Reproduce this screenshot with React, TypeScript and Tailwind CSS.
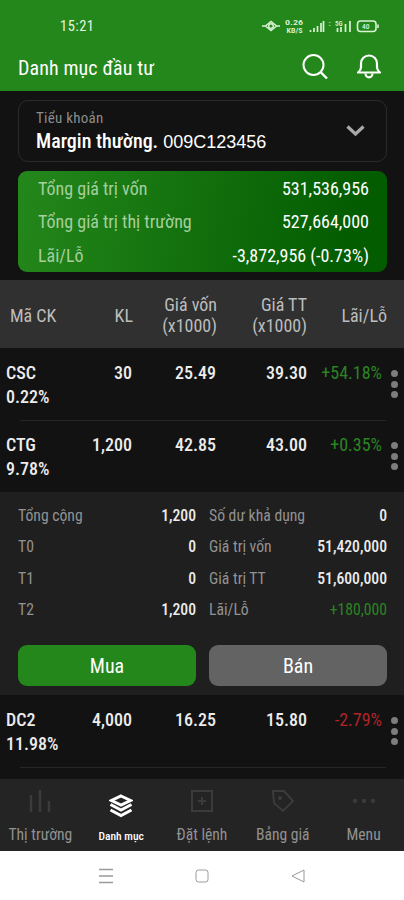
import type { ReactNode } from "react";
import clsx from "clsx";

interface Holding {
  symbol: string;
  weight: string;
  quantity: string;
  cost: string;
  price: string;
  change: string;
}

const summary = [
  { label: "Tổng giá trị vốn", value: "531,536,956" },
  { label: "Tổng giá trị thị trường", value: "527,664,000" },
  { label: "Lãi/Lỗ", value: "-3,872,956 (-0.73%)" },
];

const csc: Holding = { symbol: "CSC", weight: "0.22%", quantity: "30", cost: "25.49", price: "39.30", change: "+54.18%" };
const ctg: Holding = { symbol: "CTG", weight: "9.78%", quantity: "1,200", cost: "42.85", price: "43.00", change: "+0.35%" };
const dc2: Holding = { symbol: "DC2", weight: "11.98%", quantity: "4,000", cost: "16.25", price: "15.80", change: "-2.79%" };

const settlement = [
  { label: "Tổng cộng", value: "1,200" },
  { label: "T0", value: "0" },
  { label: "T1", value: "0" },
  { label: "T2", value: "1,200" },
];

const valuation = [
  { label: "Số dư khả dụng", value: "0" },
  { label: "Giá trị vốn", value: "51,420,000" },
  { label: "Giá trị TT", value: "51,600,000" },
  { label: "Lãi/Lỗ", value: "+180,000" },
];

function StatusBar() {
  return (
    <div className="flex h-[52px] items-center justify-between pl-[60px] pr-6">
      <span className="pt-[2px] text-[14.5px] font-[450] tracking-[0.5px] text-[#e4f6e2]">15:21</span>
      <svg width="118" height="18" viewBox="0 0 118 18" fill="none" stroke="#d9f2d6">
        <path d="M0 9h4M14 9h4M3.500 9 9 4.500l5.500 4.500L9 13.500z" strokeWidth="1.500" />
        <circle cx="9" cy="9" r="2.300" strokeWidth="1.400" />
        <g fill="#d9f2d6" stroke="none" fontFamily="Roboto, sans-serif" fontWeight="600">
          <text x="23" y="8" fontSize="7.500" textLength="18" lengthAdjust="spacingAndGlyphs">0.26</text>
          <text x="24.500" y="16" fontSize="6.500" textLength="16" lengthAdjust="spacingAndGlyphs">KB/S</text>
          <text x="66.500" y="9" fontSize="8">:</text>
          <text x="73" y="8.500" fontSize="7">5G</text>
          <text x="100" y="11.800" fontSize="7.500" fontWeight="500">40</text>
        </g>
        <path d="M48.500 15v-2M52 15v-4M55.500 15V9M59 15V6M61.500 15V4M75.500 15v-4M79 15v-5M83.500 15V7M88 15V4" strokeWidth="1.700" />
        <rect x="95.500" y="4" width="18.500" height="10.500" rx="3" strokeWidth="1.600" />
        <path d="M116 7.500v3.500" strokeWidth="1.600" />
      </svg>
    </div>
  );
}

function TitleBar() {
  return (
    <div className="flex h-[39px] items-start pl-[18px] pr-[22px]">
      <h1 className="flex-1 pt-px text-[20px] font-[450] leading-[30px] tracking-[0.1px]">Danh mục đầu tư</h1>
      <svg width="26" height="26" viewBox="0 0 26 26" fill="none" stroke="currentColor" strokeWidth="2" className="mt-[1px]">
        <circle cx="11.500" cy="12" r="10" />
        <path d="m18.500 19 6.500 6.500" strokeWidth="2.400" />
      </svg>
      <svg width="26" height="28" viewBox="0 0 26 28" fill="none" stroke="currentColor" strokeWidth="2.200" strokeLinejoin="round" className="ml-7">
        <path d="M2 20.500c2-1.700 3-3 3-5v-4a8 8 0 0 1 16 0v4c0 2 1 3.300 3 5z" />
        <path d="M9.500 21.500a3.500 3.800 0 0 0 7 0" />
      </svg>
    </div>
  );
}

function AccountPicker() {
  return (
    <div className="flex h-[62px] items-center justify-between rounded-[10px] border border-[#2b2b2b] pl-[17px] pr-[21px]">
      <div>
        <p className="pt-px text-[15px] leading-[18px] tracking-[0.25px] text-[#8c8c8c]">Tiểu khoản</p>
        <p className="flex items-baseline gap-[5px] whitespace-nowrap pt-px text-[20px] font-medium leading-[26px]">
          Margin thường.
          <span className="font-['Liberation_Sans'] text-[18px] font-normal">009C123456</span>
        </p>
      </div>
      <svg width="19" height="12" viewBox="0 0 19 12" fill="none" stroke="#a9a9a9" strokeWidth="3.200">
        <path d="m1.500 1.500 8 7.500 8-7.500" />
      </svg>
    </div>
  );
}

function Row({ item, divider, tall }: { item: Holding; divider?: boolean; tall?: boolean }) {
  const down = item.change.startsWith("-");
  return (
    <div className={clsx("relative flex pt-[13px] text-[18px] font-[480] leading-6 text-[#ececec]", tall ? "h-[84px]" : "h-[72px]")}>
      <div className="w-[70px] pl-[6px]">
        <p>{item.symbol}</p>
        <p>{item.weight}</p>
      </div>
      <span className="w-[62px] text-right">{item.quantity}</span>
      <span className="w-[84px] text-right">{item.cost}</span>
      <span className="w-[91px] text-right">{item.price}</span>
      <span className={clsx("w-[75px] text-right font-normal", down ? "text-[#ae2529]" : "text-[#2a8523]")}>{item.change}</span>
      <div className="ml-[9px] mt-[9px] flex flex-col gap-[3.500px]">
        <i className="size-[7px] rounded-full bg-[#7d7d7d]" />
        <i className="size-[7px] rounded-full bg-[#7d7d7d]" />
        <i className="size-[7px] rounded-full bg-[#7d7d7d]" />
      </div>
      {divider && <div className={clsx("absolute left-5 right-[18px] h-px bg-[#262626]", tall ? "top-[72px]" : "bottom-[-1px]")} />}
    </div>
  );
}

function DetailList({ rows }: { rows: { label: string; value: string }[] }) {
  return (
    <dl className="flex-1">
      {rows.map((row) => (
        <div key={row.label} className="flex h-[31.400px] items-center justify-between text-[15.7px]">
          <dt className="text-[#929292]">{row.label}</dt>
          <dd className={row.value.startsWith("+") ? "text-[#2a8523]" : "font-[480] text-[#ececec]"}>{row.value}</dd>
        </div>
      ))}
    </dl>
  );
}

function Tab({ label, active, children }: { label: string; active?: boolean; children: ReactNode }) {
  return (
    <div className={clsx("flex w-[81px] flex-col items-center", active ? "text-white" : "text-[#3b3b3b]")}>
      <div className="flex h-[44px] items-center">{children}</div>
      <span className={clsx("whitespace-nowrap leading-6", active ? "pt-px text-[11.5px] font-medium" : "text-[15.6px] text-[#929292]")}>{label}</span>
    </div>
  );
}

export default function App() {
  return (
    <div className="h-[900px] w-[404px] overflow-hidden bg-[#121212] font-['Roboto_Condensed',Roboto,sans-serif] text-white font-stretch-condensed">
      <header className="h-[91px] bg-[#24871b]">
        <StatusBar />
        <TitleBar />
      </header>

      <section className="flex h-[189px] flex-col gap-[9px] pl-[18px] pr-[17px] pt-[9px]">
        <AccountPicker />
        <div className="h-[101px] rounded-[9px] bg-linear-[100deg] from-[#24871b] to-[#035c00] to-90% pl-5 pr-[18px] pt-[1px]">
          {summary.map((row) => (
            <div key={row.label} className="flex h-[33.300px] items-center justify-between text-[18px]">
              <span className="text-[#a5cf9f]">{row.label}</span>
              <span className="font-[450]">{row.value}</span>
            </div>
          ))}
        </div>
      </section>

      <div className="flex h-[68px] items-center bg-[#303030] pt-[2px] text-[18px] leading-[21px] text-[#bcbcbc]">
        <span className="w-[70px] pl-[10px]">Mã CK</span>
        <span className="w-[63px] text-right">KL</span>
        <span className="w-[84px] text-right">Giá vốn<br />(x1000)</span>
        <span className="w-[90px] text-right">Giá TT<br />(x1000)</span>
        <span className="w-[80px] text-right">Lãi/Lỗ</span>
      </div>

      <Row item={csc} divider />
      <Row item={ctg} />

      <section className="h-[203px] bg-[#1f1f1f] pl-[18px] pr-[17px] pt-[8px]">
        <div className="flex gap-[13px]">
          <DetailList rows={settlement} />
          <DetailList rows={valuation} />
        </div>
        <div className="mt-[19px] flex h-[41px] gap-[13px] text-[20px] font-[450]">
          <button className="flex-1 rounded-[9px] bg-[#24871b] pt-[2px]">Mua</button>
          <button className="flex-1 rounded-[9px] bg-[#636363] pt-[2px]">Bán</button>
        </div>
      </section>

      <Row item={dc2} divider tall />

      <nav className="flex h-[72px] bg-[#242424]">
        <Tab label="Thị trường">
          <svg width="24" height="24" viewBox="0 0 24 24" stroke="currentColor" strokeWidth="2.500">
            <path d="M3 23V6M12 23V1M21 23V12" />
          </svg>
        </Tab>
        <Tab label="Danh mục" active>
          <svg width="24" height="24" viewBox="0 0 24 24" fill="none" stroke="currentColor" strokeWidth="2.500" className="mt-[9px]">
            <path d="m12 2 9.500 4.500L12 11 2.500 6.500zM1.500 10.500 12 16l10.500-5.500M1.500 16 12 21.500 22.500 16" strokeWidth="3" />
          </svg>
        </Tab>
        <Tab label="Đặt lệnh">
          <svg width="22" height="22" viewBox="0 0 22 22" fill="none" stroke="currentColor" strokeWidth="2">
            <path d="M1 1h20v20H1zM11 7v8M7 11h8" />
          </svg>
        </Tab>
        <Tab label="Bảng giá">
          <svg width="24" height="24" viewBox="0 0 24 24" fill="none" stroke="currentColor" strokeWidth="2">
            <path d="M2 2h11l9 10-10 10L3 14z" />
            <circle cx="9" cy="9" r="1" />
          </svg>
        </Tab>
        <Tab label="Menu">
          <svg width="24" height="6" viewBox="0 0 24 6" fill="currentColor">
            <circle cx="3" cy="3" r="2.200" />
            <circle cx="12" cy="3" r="2.200" />
            <circle cx="21" cy="3" r="2.200" />
          </svg>
        </Tab>
      </nav>

      <div className="flex h-[49px] items-center gap-[82px] bg-white pl-[99px] text-[#9a9a9a]">
        <svg width="14" height="16" viewBox="0 0 14 16" stroke="currentColor" strokeWidth="1.300">
          <path d="M0 1.500h14M0 8h14M0 14.500h14" />
        </svg>
        <svg width="14" height="14" viewBox="0 0 14 14" fill="none" stroke="currentColor">
          <rect x="1" y="1" width="12" height="12" rx="2.500" />
        </svg>
        <svg width="14" height="14" viewBox="0 0 14 14" fill="none" stroke="currentColor" strokeLinejoin="round">
          <path d="M13 1v12L1 7z" />
        </svg>
      </div>
    </div>
  );
}
